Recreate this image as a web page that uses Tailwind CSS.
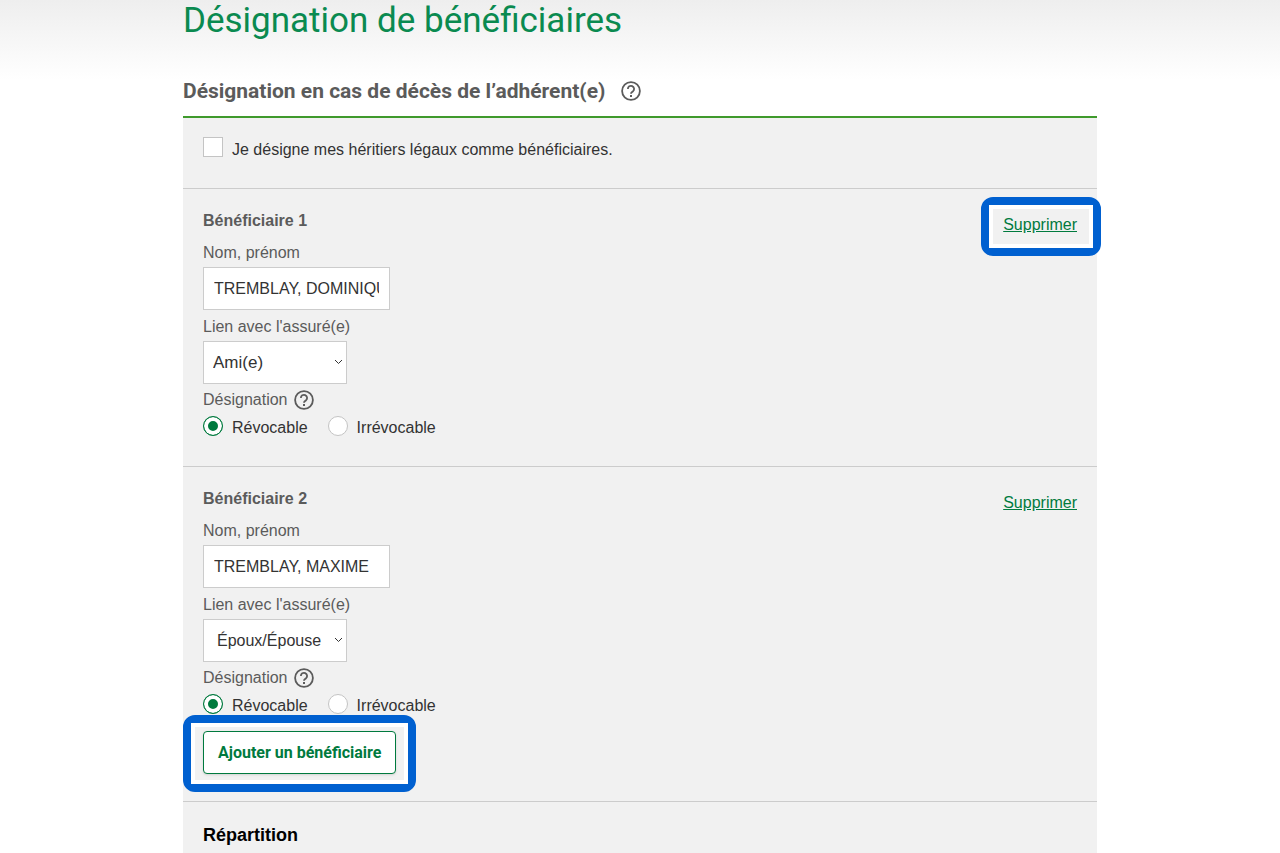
<!DOCTYPE html>
<html lang="fr">
<head>
  <meta charset="UTF-8">
  <meta name="viewport" content="width=device-width, initial-scale=1.0">
  <title>Désignation de bénéficiaires</title>
  <script src="https://cdn.jsdelivr.net/npm/@tailwindcss/browser@4"></script>
</head>
<body class="bg-white bg-linear-to-b from-[#eeeeee] to-white bg-[length:100%_80px] bg-no-repeat overflow-x-hidden font-['Liberation_Sans',Arial,sans-serif] text-base text-[#333]">
  <!-- Help icon -->
  <svg class="hidden">
    <symbol id="help" viewBox="0 0 20 20">
      <circle cx="10" cy="10" r="8.9" fill="none" stroke="currentColor" stroke-width="1.8" />
      <path d="M6.9 8a3.1 3.1 0 1 1 5.2 2.2c-1.1.9-2.1 1.3-2.1 2.5" fill="none" stroke="currentColor" stroke-width="1.8" />
      <path d="M9 13.9h2v2H9z" fill="currentColor" />
    </symbol>
  </svg>

  <main class="max-w-[914px] mx-auto">
    <h1 class="pt-px font-[Roboto,sans-serif] text-[35px] leading-10 text-[#0a8a50]">Désignation de bénéficiaires</h1>

    <div class="flex items-center gap-4 pt-[34px] pb-[9px]">
      <h2 class="font-[Roboto,sans-serif] font-bold text-[21px] leading-8 text-[#5b5b5b]">Désignation en cas de décès de l’adhérent(e)</h2>
      <button type="button" aria-label="Aide" class="text-[#5b5b5b]"><svg class="size-5"><use href="#help" /></svg></button>
    </div>

    <form class="border-t-2 border-[#3f9a2c] bg-[#f1f1f1]">
      <div class="flex gap-[9px] px-5 pt-[19px] pb-[26px] border-b border-[#ccc]">
        <input type="checkbox" id="heritiers" class="appearance-none size-5 bg-white border border-[#c4c4c4] checked:bg-[#007a3e]">
        <label for="heritiers" class="pt-px leading-6">Je désigne mes héritiers légaux comme bénéficiaires.</label>
      </div>

      <!-- Beneficiary 1 -->
      <section class="px-5 pt-5 pb-[26px] border-b border-[#ccc]">
        <div class="flex justify-between">
          <h3 class="font-bold leading-6 text-[#5b5b5b]">Bénéficiaire 1</h3>
          <div class="relative h-6 pt-1">
            <a href="#" class="leading-6 text-[#007a3e] underline">Supprimer</a>
            <div class="absolute -left-[22px] -right-6 -top-3 h-[59px] border-8 border-[#0060d0] rounded-xl pointer-events-none">
              <div class="h-full border-4 border-white"></div>
            </div>
          </div>
        </div>
        <div class="mt-2 flex flex-col items-start gap-[2px]">
          <label for="nom1" class="leading-6 text-[#5b5b5b]">Nom, prénom</label>
          <input type="text" id="nom1" value="TREMBLAY, DOMINIQUE" class="w-[187px] h-[43px] px-[10px] bg-white border border-[#ccc]">
          <label for="lien1" class="leading-6 mt-[3px] text-[#5b5b5b]">Lien avec l'assuré(e)</label>
          <div class="relative">
            <select id="lien1" class="appearance-none block w-36 h-[43px] pl-[9px] text-[17px] bg-white border border-[#ccc]">
              <option>Ami(e)</option>
              <option>Époux/Épouse</option>
            </select>
            <svg class="absolute right-1 top-[18px] w-[9px] h-[6px] pointer-events-none" viewBox="0 0 9 6" fill="none" stroke="#333" stroke-width="1"><path d="M1 1l3.5 3.5L8 1" /></svg>
          </div>
        </div>
        <fieldset class="mt-1">
          <legend class="flex items-center gap-[6px] leading-6 text-[#5b5b5b]">
            Désignation
            <button type="button" aria-label="Aide"><svg class="size-5"><use href="#help" /></svg></button>
          </legend>
          <div class="flex gap-5 pt-1">
            <div class="flex gap-[9px]">
              <input type="radio" name="designation1" id="rev1" checked class="appearance-none size-5 rounded-full bg-white border border-[#c4c4c4] checked:border-[#007a3e] checked:bg-[#007a3e] checked:shadow-[inset_0_0_0_4px_white]">
              <label for="rev1" class="leading-6">Révocable</label>
            </div>
            <div class="flex gap-[9px]">
              <input type="radio" name="designation1" id="irrev1" class="appearance-none size-5 rounded-full bg-white border border-[#c4c4c4] checked:border-[#007a3e] checked:bg-[#007a3e] checked:shadow-[inset_0_0_0_4px_white]">
              <label for="irrev1" class="leading-6">Irrévocable</label>
            </div>
          </div>
        </fieldset>
      </section>

      <!-- Beneficiary 2 -->
      <section class="px-5 pt-5 pb-[27px] border-b border-[#ccc]">
        <div class="flex justify-between">
          <h3 class="font-bold leading-6 text-[#5b5b5b]">Bénéficiaire 2</h3>
          <div class="h-6 pt-1">
            <a href="#" class="leading-6 text-[#007a3e] underline">Supprimer</a>
          </div>
        </div>
        <div class="mt-2 flex flex-col items-start gap-[2px]">
          <label for="nom2" class="leading-6 text-[#5b5b5b]">Nom, prénom</label>
          <input type="text" id="nom2" value="TREMBLAY, MAXIME" class="w-[187px] h-[43px] px-[10px] bg-white border border-[#ccc]">
          <label for="lien2" class="leading-6 mt-[3px] text-[#5b5b5b]">Lien avec l'assuré(e)</label>
          <div class="relative">
            <select id="lien2" class="appearance-none block w-36 h-[43px] pl-[13px] bg-white border border-[#ccc]">
              <option>Époux/Épouse</option>
              <option>Ami(e)</option>
            </select>
            <svg class="absolute right-1 top-[18px] w-[9px] h-[6px] pointer-events-none" viewBox="0 0 9 6" fill="none" stroke="#333" stroke-width="1"><path d="M1 1l3.5 3.5L8 1" /></svg>
          </div>
        </div>
        <fieldset class="mt-1">
          <legend class="flex items-center gap-[6px] leading-6 text-[#5b5b5b]">
            Désignation
            <button type="button" aria-label="Aide"><svg class="size-5"><use href="#help" /></svg></button>
          </legend>
          <div class="flex gap-5 pt-1">
            <div class="flex gap-[9px]">
              <input type="radio" name="designation2" id="rev2" checked class="appearance-none size-5 rounded-full bg-white border border-[#c4c4c4] checked:border-[#007a3e] checked:bg-[#007a3e] checked:shadow-[inset_0_0_0_4px_white]">
              <label for="rev2" class="leading-6">Révocable</label>
            </div>
            <div class="flex gap-[9px]">
              <input type="radio" name="designation2" id="irrev2" class="appearance-none size-5 rounded-full bg-white border border-[#c4c4c4] checked:border-[#007a3e] checked:bg-[#007a3e] checked:shadow-[inset_0_0_0_4px_white]">
              <label for="irrev2" class="leading-6">Irrévocable</label>
            </div>
          </div>
        </fieldset>
        <div class="relative w-fit mt-[13px]">
          <button type="button" class="block h-[43px] px-[14px] font-[Roboto,sans-serif] font-bold text-[#007a3e] bg-white border border-[#007a3e] rounded shadow">Ajouter un bénéficiaire</button>
          <div class="absolute -left-5 -right-5 -top-4 h-[77px] border-8 border-[#0060d0] rounded-xl pointer-events-none">
            <div class="h-full border-4 border-white"></div>
          </div>
        </div>
      </section>

      <section class="px-5 pt-[21px] pb-6">
        <h3 class="font-bold text-lg leading-6 text-black">Répartition</h3>
      </section>
    </form>
  </main>
</body>
</html>
